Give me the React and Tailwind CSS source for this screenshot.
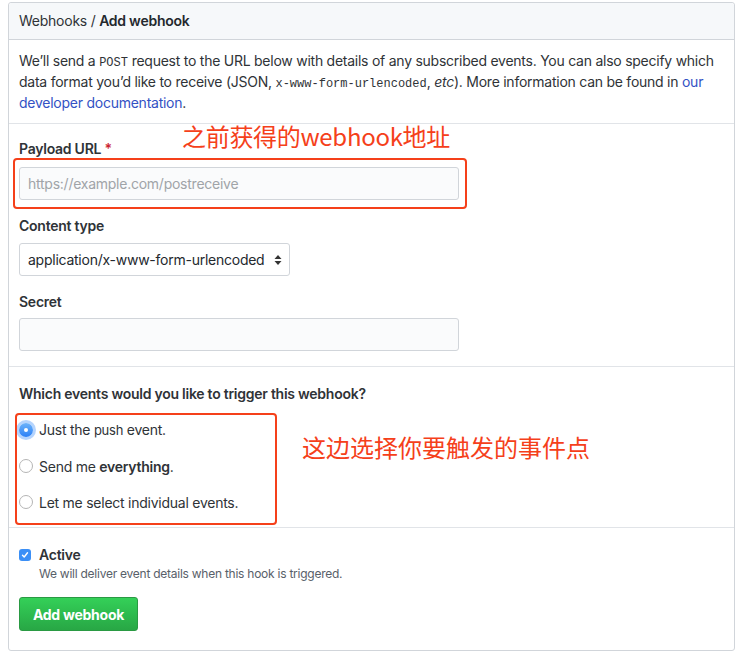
import React from "react";

const font = { fontFamily: "Inter, 'Liberation Sans', sans-serif" };

const Radio = ({ checked }) =>
  checked ? (
    <span className="flex h-[14px] w-[14px] items-center justify-center rounded-full bg-gradient-to-b from-[#6cb3fa] to-[#2a7ff6] shadow-[0_0_0_3px_rgba(90,160,250,0.45)]">
      <span className="h-[4px] w-[4px] rounded-full bg-white" />
    </span>
  ) : (
    <span className="h-[14px] w-[14px] rounded-full border border-[#b5b5b5] bg-white" />
  );

const App = () => {
  return (
    <div className="min-h-[666px] bg-white pl-[8px] pt-[2px] text-[14px] tracking-[-0.25px] text-[#2f3337]" style={font}>
      <div className="w-[727px] rounded-[3px] border border-[#d1d5da]">
        <div className="rounded-t-[3px] border-b border-[#d1d5da] bg-[#f6f8fa] px-[10px] py-[8px] leading-[20px]">
          <span>Webhooks / </span>
          <span className="font-semibold text-[#24292e]">Add webhook</span>
        </div>

        <div className="border-b border-[#e1e4e8] px-[10px] py-[10px]">
          <p className="leading-[21px]">
            We’ll send a <code className="font-mono text-[12px] leading-none tracking-normal">POST</code> request to the URL below with details of any subscribed events. You can also specify which data format you’d like to receive (JSON, <code className="font-mono text-[12px] leading-none tracking-normal">x-www-form-urlencoded</code>, <em>etc</em>). More information can be found in{" "}
            <a className="text-[#3352c4]" href="#">our developer documentation</a>.
          </p>
        </div>

        <div className="relative border-b border-[#e1e4e8] px-[10px] pb-[15px] pt-[15px]">
          <div className="flex flex-col gap-[16px]">
            <div>
              <div className="mb-[8px] font-semibold leading-[20px]">
                Payload URL <span className="text-[#cb2431]">*</span>
              </div>
              <input
                className="h-[33px] w-[440px] rounded-[3px] border border-[#d1d5da] bg-[#fafbfc] px-[8px] text-[14px] placeholder-[#a0a4a8] outline-none"
                placeholder="https://example.com/postreceive"
              />
            </div>
            <div>
              <div className="mb-[7px] font-semibold leading-[20px]">Content type</div>
              <div className="flex h-[33px] w-[271px] items-center justify-between rounded-[3px] border border-[#d1d5da] bg-white pl-[8px] pr-[7px] text-[#24292e]">
                <span>application/x-www-form-urlencoded</span>
                <svg width="8" height="12" viewBox="0 0 8 12">
                  <path d="M4 1 L7.5 5 H0.5 Z M4 11 L0.5 7 H7.5 Z" fill="#333" />
                </svg>
              </div>
            </div>
            <div>
              <div className="mb-[6px] font-semibold leading-[20px]">Secret</div>
              <div className="h-[33px] w-[440px] rounded-[3px] border border-[#d1d5da] bg-[#fafbfc]" />
            </div>
          </div>
          <div className="absolute left-[4px] top-[34px] h-[51px] w-[454px] rounded-[4px] border-[2.5px] border-[#f5401a]" />
          <div
            className="absolute left-[173px] top-[-2px] text-[24px] leading-[28px] tracking-[-0.3px] text-[#f5401a]"
            style={{ fontFamily: "'Noto Sans CJK SC', sans-serif" }}
          >
            之前获得的webhook地址
          </div>
        </div>

        <div className="relative border-b border-[#e1e4e8] px-[10px] pb-[7px] pt-[17px]">
          <div className="mb-[8px] font-semibold leading-[20px]">Which events would you like to trigger this webhook?</div>
          <div className="flex flex-col">
            <label className="flex h-[36px] items-center gap-[6px]">
              <Radio checked />
              <span>
                Just the <span className="text-[13px]">push</span> event.
              </span>
            </label>
            <label className="flex h-[36px] items-center gap-[6px]">
              <Radio />
              <span>
                Send me <strong className="font-semibold">everything</strong>.
              </span>
            </label>
            <label className="flex h-[36px] items-center gap-[6px]">
              <Radio />
              <span>Let me select individual events.</span>
            </label>
          </div>
          <div className="absolute left-[6px] top-[46px] h-[112px] w-[262px] rounded-[4px] border-[2.5px] border-[#f5401a]" />
          <div
            className="absolute left-[293px] top-[66px] text-[24px] leading-[28px] tracking-normal text-[#f5401a]"
            style={{ fontFamily: "'Noto Sans CJK SC', sans-serif" }}
          >
            这边选择你要触发的事件点
          </div>
        </div>

        <div className="px-[10px] pb-[19px] pt-[17px]">
          <div className="flex items-start gap-[8px]">
            <span className="mt-[4px] flex h-[12px] w-[12px] items-center justify-center rounded-[3px] bg-[#3b8ff6]">
              <svg width="8" height="8" viewBox="0 0 8 8">
                <path d="M1.5 4.2 L3.2 6 L6.5 1.8" fill="none" stroke="white" strokeWidth="1.4" strokeLinecap="round" strokeLinejoin="round" />
              </svg>
            </span>
            <div>
              <div className="font-semibold leading-[20px]">Active</div>
              <div className="text-[12px] leading-[18px] text-[#586069]">We will deliver event details when this hook is triggered.</div>
            </div>
          </div>
          <button className="mt-[14px] flex h-[34px] w-[119px] items-center justify-center rounded-[3px] border border-[#2a9a43] bg-gradient-to-b from-[#34d058] to-[#28a745] font-bold text-white">
            Add webhook
          </button>
        </div>
      </div>
    </div>
  );
};

export default App;
